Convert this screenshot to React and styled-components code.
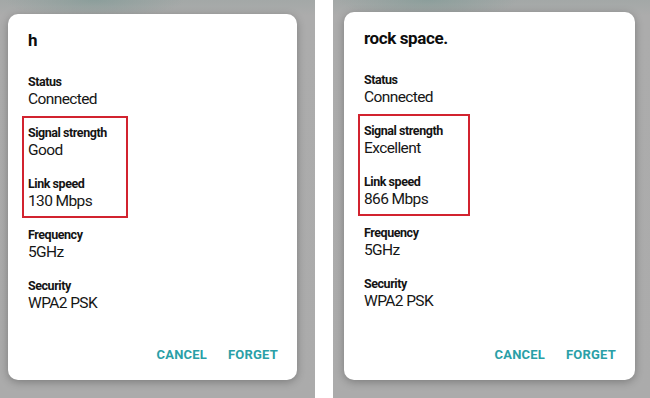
import React from "react";
import styled, { createGlobalStyle } from "styled-components";

const GlobalStyle = createGlobalStyle`
  html, body {
    margin: 0;
    padding: 0;
    background: #ffffff;
  }
  body {
    font-family: Roboto, "Noto Sans", "Liberation Sans", sans-serif;
  }
`;

const Page = styled.div`
  display: flex;
  width: 650px;
  height: 398px;
  gap: 18px;
  background: #ffffff;
  overflow: hidden;
`;

const Panel = styled.div`
  flex: 0 0 ${(p) => p.$width}px;
  box-sizing: border-box;
  padding: ${(p) => p.$top}px 0 0 ${(p) => p.$left}px;
  background:
    radial-gradient(ellipse 90px 18px at 30% 0, rgba(120, 150, 145, 0.55), rgba(120, 150, 145, 0) 100%),
    linear-gradient(to bottom, #a3a8a7 0, #acacac 16px, #ababab 100%);
`;

const Card = styled.div`
  display: flex;
  flex-direction: column;
  box-sizing: border-box;
  width: ${(p) => p.$width}px;
  height: ${(p) => p.$height}px;
  padding: 16px 19px 17px 20px;
  background: #ffffff;
  border-radius: 10px;
  box-shadow: 0 2px 8px rgba(0, 0, 0, 0.28);
`;

const Title = styled.div`
  font-size: 17px;
  line-height: 20px;
  font-weight: 700;
  letter-spacing: -0.4px;
  color: #0d0d0d;
  margin-bottom: 24px;
`;

const Fields = styled.div`
  display: flex;
  flex-direction: column;
  gap: 16px;
`;

const Field = styled.div`
  display: flex;
  flex-direction: column;
`;

const Label = styled.div`
  font-size: 12.5px;
  line-height: 16px;
  font-weight: 700;
  letter-spacing: -0.45px;
  color: #141414;
`;

const Value = styled.div`
  font-size: 15.5px;
  line-height: 19px;
  letter-spacing: -0.6px;
  color: #161616;
`;

const Highlight = styled.div`
  display: flex;
  flex-direction: column;
  gap: 16px;
  width: ${(p) => p.$width}px;
  box-sizing: border-box;
  margin: -9px 0 -7px -6px;
  padding: 7px 4px 5px 4px;
  border: 2px solid #d2232f;
`;

const Actions = styled.div`
  display: flex;
  justify-content: flex-end;
  gap: 21px;
  margin-top: auto;
`;

const ActionButton = styled.button`
  border: 0;
  padding: 0;
  background: none;
  font-family: inherit;
  font-size: 13px;
  line-height: 16px;
  font-weight: 700;
  letter-spacing: 0.2px;
  color: #2a9fa7;
  cursor: pointer;
`;

const FieldItem = ({ label, value }) => (
  <Field>
    <Label>{label}</Label>
    <Value>{value}</Value>
  </Field>
);

const NetworkDialog = ({ name, signal, speed, boxWidth, width, height }) => (
  <Card $width={width} $height={height}>
    <Title>{name}</Title>
    <Fields>
      <FieldItem label="Status" value="Connected" />
      <Highlight $width={boxWidth}>
        <FieldItem label="Signal strength" value={signal} />
        <FieldItem label="Link speed" value={speed} />
      </Highlight>
      <FieldItem label="Frequency" value="5GHz" />
      <FieldItem label="Security" value="WPA2 PSK" />
    </Fields>
    <Actions>
      <ActionButton>CANCEL</ActionButton>
      <ActionButton>FORGET</ActionButton>
    </Actions>
  </Card>
);

const App = () => {
  return (
    <>
      <GlobalStyle />
      <Page>
        <Panel $width={315} $top={14} $left={8}>
          <NetworkDialog
            name="h"
            signal="Good"
            speed="130 Mbps"
            boxWidth={106}
            width={289}
            height={366}
          />
        </Panel>
        <Panel $width={317} $top={12} $left={11}>
          <NetworkDialog
            name="rock space."
            signal="Excellent"
            speed="866 Mbps"
            boxWidth={112}
            width={291}
            height={368}
          />
        </Panel>
      </Page>
    </>
  );
};

export default App;
